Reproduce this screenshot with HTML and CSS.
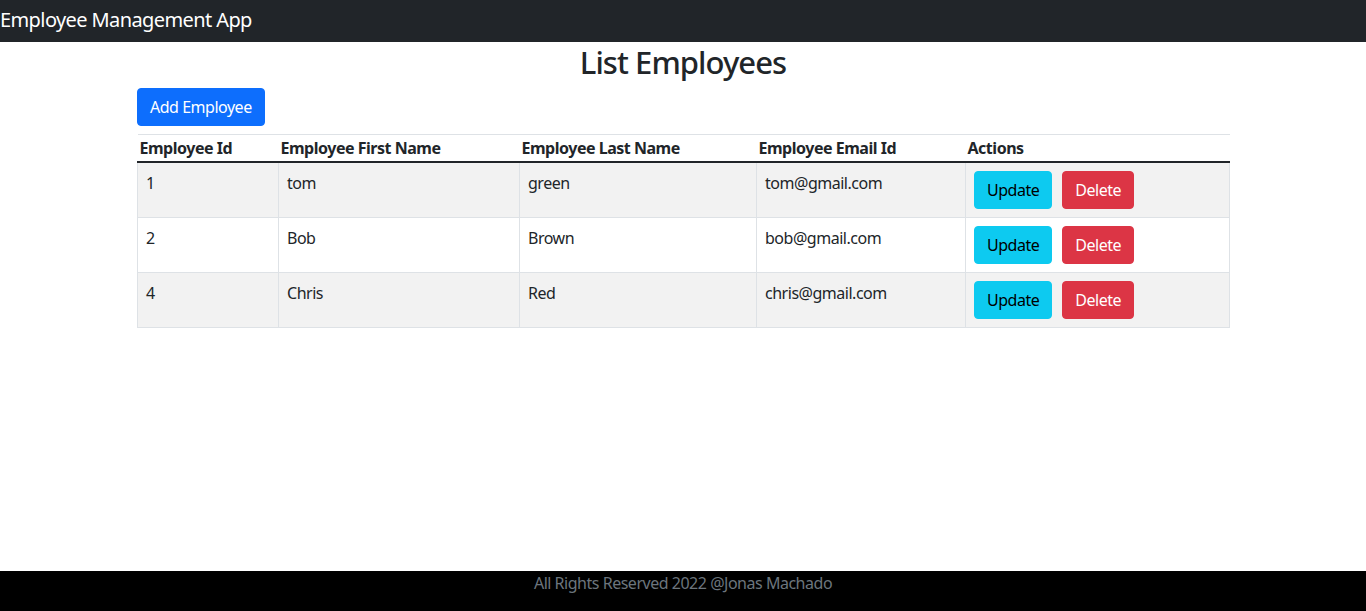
FILE: index.html
```html
<!DOCTYPE html>
<html lang="en">
<head>
<meta charset="utf-8">
<title>Employee Management App</title>
<link rel="stylesheet" href="styles.css">
</head>
<body>
<header class="navbar">
  <a class="brand" href="#">Employee Management App</a>
</header>
<main class="container">
  <h2 class="title">List Employees</h2>
  <div class="toolbar">
    <button class="btn btn-primary">Add Employee</button>
  </div>
  <table class="table">
    <colgroup>
      <col class="c1"><col class="c2"><col class="c3"><col class="c4"><col class="c5">
    </colgroup>
    <thead>
      <tr>
        <th>Employee Id</th>
        <th>Employee First Name</th>
        <th>Employee Last Name</th>
        <th>Employee Email Id</th>
        <th>Actions</th>
      </tr>
    </thead>
    <tbody>
      <tr class="odd">
        <td>1</td><td>tom</td><td>green</td><td>tom@gmail.com</td>
        <td><button class="btn btn-info">Update</button><button class="btn btn-danger">Delete</button></td>
      </tr>
      <tr>
        <td>2</td><td>Bob</td><td>Brown</td><td>bob@gmail.com</td>
        <td><button class="btn btn-info">Update</button><button class="btn btn-danger">Delete</button></td>
      </tr>
      <tr class="odd">
        <td>4</td><td>Chris</td><td>Red</td><td>chris@gmail.com</td>
        <td><button class="btn btn-info">Update</button><button class="btn btn-danger">Delete</button></td>
      </tr>
    </tbody>
  </table>
</main>
<footer class="footer">
  <span class="muted">All Rights Reserved 2022 @Jonas Machado</span>
</footer>
</body>
</html>
```
FILE: styles.css
```css
* { box-sizing: border-box; }
html, body {
  margin: 0;
  padding: 0;
}
body {
  font-family: "Noto Sans", "Open Sans", sans-serif;
  font-size: 16px;
  line-height: 1.5;
  letter-spacing: -0.03em;
  color: #212529;
  background: #fff;
}
.navbar {
  height: 42px;
  background: #212529;
  display: flex;
  align-items: center;
}
.brand {
  color: #fff;
  text-decoration: none;
  font-size: 20px;
  letter-spacing: -0.03em;
  line-height: 30px;
  padding-bottom: 2px;
}
.container {
  width: 1092px;
  margin: 0 auto;
}
.title {
  margin: 0 0 8px;
  padding-top: 1px;
  height: 38px;
  text-align: center;
  font-size: 31px;
  font-weight: 500;
  letter-spacing: -0.03em;
  line-height: 38px;
}
.toolbar {
  display: flex;
  margin-bottom: 8px;
}
.btn {
  font-family: inherit;
  font-size: 16px;
  letter-spacing: -0.03em;
  line-height: 24px;
  padding: 6px 12px;
  border: 1px solid transparent;
  border-radius: 4px;
  cursor: pointer;
}
.btn-primary { background: #0d6efd; border-color: #0d6efd; color: #fff; }
.btn-info { background: #0dcaf0; border-color: #0dcaf0; color: #000; }
.btn-danger { background: #dc3545; border-color: #dc3545; color: #fff; margin-left: 10px; }
.table {
  width: 100%;
  border-collapse: collapse;
  table-layout: fixed;
}
.c1 { width: 141px; }
.c2 { width: 241px; }
.c3 { width: 237px; }
.c4 { width: 209px; }
.c5 { width: 264px; }
.table th {
  text-align: left;
  font-weight: 700;
  padding: 1px 2px;
  border-top: 1px solid #dee2e6;
  border-bottom: 2px solid #212529;
}
.table td {
  padding: 8px;
  border: 1px solid #dee2e6;
  vertical-align: top;
}
.table tbody tr.odd td { background: #f2f2f2; }
.footer {
  position: fixed;
  left: 0;
  right: 0;
  bottom: 0;
  height: 40px;
  background: #000;
  text-align: center;
}
.muted { color: #6c757d; }
```
